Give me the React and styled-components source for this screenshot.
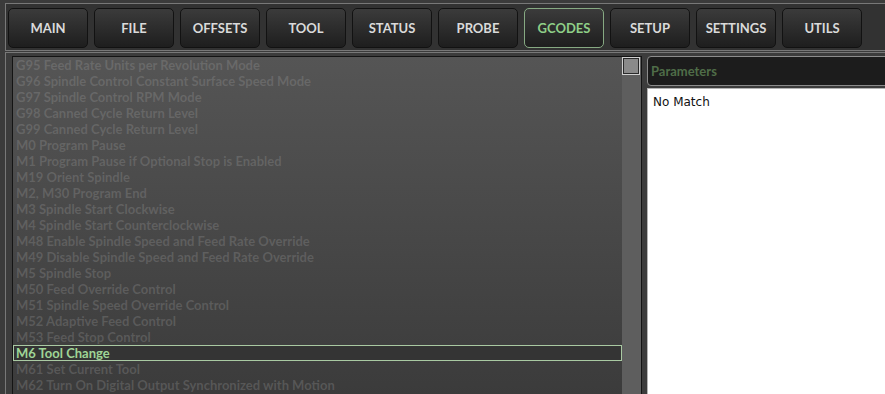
import * as React from "react";
import styled, { createGlobalStyle } from "styled-components";

const GlobalStyle = createGlobalStyle`
  html, body {
    margin: 0;
    padding: 0;
    background: #3b3b3b;
    overflow: hidden;
    font-family: Lato, "Open Sans", sans-serif;
  }
`;

const Screen = styled.div`
  width: 885px;
  height: 394px;
  overflow: hidden;
  padding: 3px 0 0 5px;
  box-sizing: border-box;
`;

const NavFrame = styled.div`
  width: 1000px;
  box-sizing: border-box;
  display: flex;
  gap: 6px;
  padding: 4px 2px 2px;
  border: 1px solid #787878;
  border-right: none;
  background: #323232;
`;

const NavButton = styled.div`
  width: 80px;
  height: 40px;
  box-sizing: border-box;
  flex: none;
  display: flex;
  align-items: center;
  justify-content: center;
  border: 1px solid ${(p) => (p.active ? "#86a982" : "#121212")};
  border-radius: 5px;
  background: linear-gradient(#3b3b3b, #1e1e1e);
  color: ${(p) => (p.active ? "#8fcf88" : "#dadada")};
  font-size: 13px;
  font-weight: 700;
`;

const ContentFrame = styled.div`
  width: 1000px;
  height: 400px;
  box-sizing: border-box;
  margin-top: 1px;
  display: flex;
  gap: 5px;
  align-items: flex-start;
  padding: 3px 0 0 6px;
  border-top: 1px solid #787878;
  border-left: 1px solid #787878;
  background: #3c3c3c;
`;

const ListBox = styled.div`
  width: 630px;
  height: 360px;
  box-sizing: border-box;
  flex: none;
  display: flex;
  border: 1px solid #141414;
`;

const ListArea = styled.div`
  flex: 1;
  background: linear-gradient(#555555, #3b3b3b 340px);
  overflow: hidden;
`;

const Item = styled.div`
  height: 16px;
  box-sizing: border-box;
  padding-left: 2px;
  line-height: 14px;
  border: 1px solid ${(p) => (p.selected ? "#a9c9a2" : "transparent")};
  background: ${(p) => (p.selected ? "#343434" : "transparent")};
  color: ${(p) => (p.selected ? "#9fd496" : "rgba(170, 170, 170, 0.25)")};
  font-size: 13px;
  font-weight: 700;
  white-space: nowrap;
`;

const ScrollTrack = styled.div`
  width: 19px;
  flex: none;
  background: #5e5e5e;
`;

const ScrollHandle = styled.div`
  width: 18px;
  height: 18px;
  box-sizing: border-box;
  border: 1px solid #cfcfcf;
  box-shadow: inset 0 0 0 1px #2a2a2a;
  background: #8a8a8a;
`;

const ParamsPanel = styled.div`
  width: 300px;
  flex: none;
  display: flex;
  flex-direction: column;
  gap: 2px;
`;

const ParamsHeader = styled.div`
  height: 30px;
  box-sizing: border-box;
  display: flex;
  align-items: center;
  padding: 0 0 1px 3px;
  border: 1px solid #8c8c8c;
  border-radius: 4px;
  background: #1c1c1c;
  color: #4f6d48;
  font-size: 13px;
  font-weight: 700;
`;

const ParamsBody = styled.div`
  height: 320px;
  box-sizing: border-box;
  padding: 6px 5px;
  border: 1px solid #b4b4b4;
  background: #ffffff;
  color: #111;
  font-family: "DejaVu Sans", sans-serif;
  font-size: 12px;
`;

const tabs = ["MAIN", "FILE", "OFFSETS", "TOOL", "STATUS", "PROBE", "GCODES", "SETUP", "SETTINGS", "UTILS"];

const codes = [
  "G95 Feed Rate Units per Revolution Mode",
  "G96 Spindle Control Constant Surface Speed Mode",
  "G97 Spindle Control RPM Mode",
  "G98 Canned Cycle Return Level",
  "G99 Canned Cycle Return Level",
  "M0 Program Pause",
  "M1 Program Pause if Optional Stop is Enabled",
  "M19 Orient Spindle",
  "M2, M30 Program End",
  "M3 Spindle Start Clockwise",
  "M4 Spindle Start Counterclockwise",
  "M48 Enable Spindle Speed and Feed Rate Override",
  "M49 Disable Spindle Speed and Feed Rate Override",
  "M5 Spindle Stop",
  "M50 Feed Override Control",
  "M51 Spindle Speed Override Control",
  "M52 Adaptive Feed Control",
  "M53 Feed Stop Control",
  "M6 Tool Change",
  "M61 Set Current Tool",
  "M62 Turn On Digital Output Synchronized with Motion",
];

export default function App() {
  return (
    <Screen>
      <GlobalStyle />
      <NavFrame>
        {tabs.map((t) => (
          <NavButton key={t} active={t === "GCODES"}>
            {t}
          </NavButton>
        ))}
      </NavFrame>
      <ContentFrame>
        <ListBox>
          <ListArea>
            {codes.map((c) => (
              <Item key={c} selected={c === "M6 Tool Change"}>
                {c}
              </Item>
            ))}
          </ListArea>
          <ScrollTrack>
            <ScrollHandle />
          </ScrollTrack>
        </ListBox>
        <ParamsPanel>
          <ParamsHeader>Parameters</ParamsHeader>
          <ParamsBody>No Match</ParamsBody>
        </ParamsPanel>
      </ContentFrame>
    </Screen>
  );
}
